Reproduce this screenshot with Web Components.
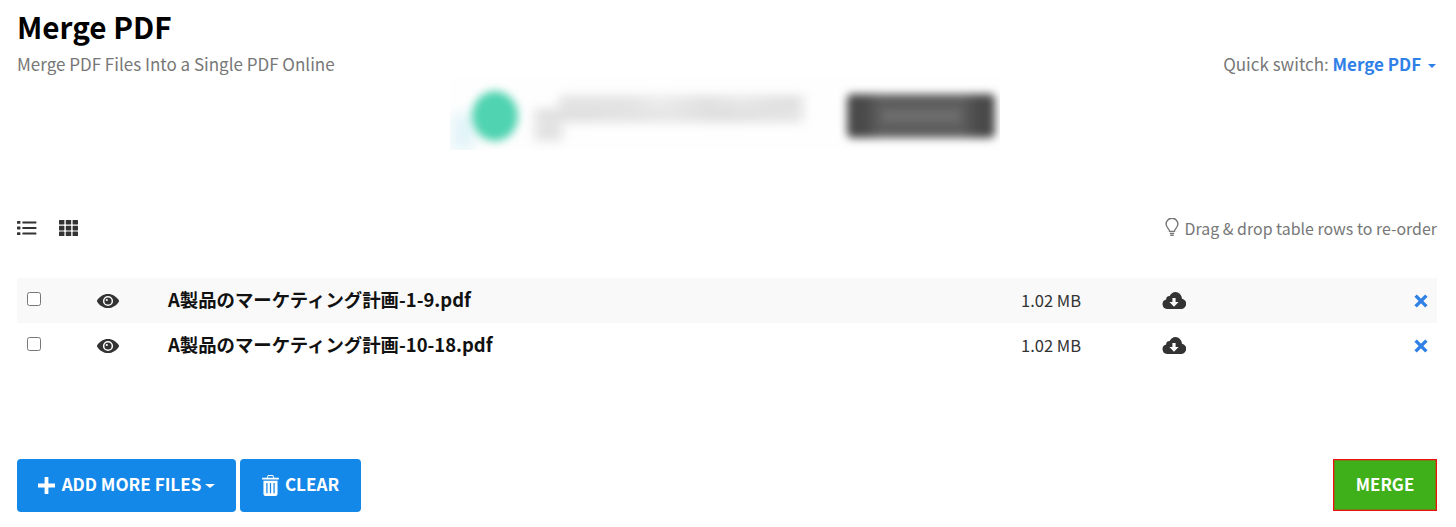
<!DOCTYPE html>
<html lang="ja">
<head>
<meta charset="utf-8">
<title>Merge PDF</title>
<style>
    html, body { margin: 0; background: #fff; }
    body {
        font-family: "Noto Sans CJK JP", "Noto Sans", sans-serif;
        color: #333;
    }
    merge-app { height: 527px; }
</style>
</head>
<body>
<merge-app>
    <page-head slot="head" heading="Merge PDF" tagline="Merge PDF Files Into a Single PDF Online"></page-head>
    <ad-banner slot="ad"></ad-banner>
    <view-bar slot="bar"></view-bar>
    <file-row slot="rows" name="A製品のマーケティング計画-1-9.pdf" size="1.02 MB" striped></file-row>
    <file-row slot="rows" name="A製品のマーケティング計画-10-18.pdf" size="1.02 MB"></file-row>
    <action-bar slot="actions"></action-bar>
</merge-app>

<script>
const ICONS = {
    list: '<svg viewBox="0 0 20 16" width="20" height="16"><g fill="currentColor"><rect x="0" y="1" width="3.4" height="2.8" rx=".6"/><rect x="0" y="6.6" width="3.4" height="2.8" rx=".6"/><rect x="0" y="12.2" width="3.4" height="2.8" rx=".6"/><rect x="5.4" y="1.4" width="14" height="2" rx=".4"/><rect x="5.4" y="7" width="14" height="2" rx=".4"/><rect x="5.4" y="12.6" width="14" height="2" rx=".4"/></g></svg>',
    grid: '<svg viewBox="0 0 19 16" width="19" height="16"><g fill="currentColor"><rect x="0" y="0" width="5.4" height="4.6" rx=".6"/><rect x="6.8" y="0" width="5.4" height="4.6" rx=".6"/><rect x="13.6" y="0" width="5.4" height="4.6" rx=".6"/><rect x="0" y="5.8" width="5.4" height="4.6" rx=".6"/><rect x="6.8" y="5.8" width="5.4" height="4.6" rx=".6"/><rect x="13.6" y="5.8" width="5.4" height="4.6" rx=".6"/><rect x="0" y="11.6" width="5.4" height="4.6" rx=".6"/><rect x="6.8" y="11.6" width="5.4" height="4.6" rx=".6"/><rect x="13.6" y="11.6" width="5.4" height="4.6" rx=".6"/></g></svg>',
    eye: '<svg viewBox="0 0 22 14" width="22" height="14"><path fill="currentColor" fill-rule="evenodd" d="M11 0C6.4 0 2.600 2.700.3 6.100a1.600 1.600 0 0 0 0 1.800C2.600 11.300 6.400 14 11 14s8.400-2.700 10.700-6.100a1.600 1.600 0 0 0 0-1.800C19.400 2.700 15.600 0 11 0zm0 1.900a5.100 5.100 0 1 1 0 10.200 5.100 5.100 0 0 1 0-10.200z"/><path fill="currentColor" fill-rule="evenodd" d="M11 3.400a3.600 3.600 0 1 1 0 7.200 3.600 3.600 0 0 1 0-7.200zM9.800 4.900a1.100 1.100 0 1 0 0 2.200 1.100 1.100 0 0 0 0-2.200z"/></svg>',
    cloud: '<svg viewBox="0 0 24 17" width="24" height="17"><path fill="currentColor" fill-rule="evenodd" d="M13.600 0c-2.700 0-5 1.700-5.900 4.100A3.600 3.600 0 0 0 4.100 7.400 4.900 4.900 0 0 0 5 17h13.800a5.200 5.200 0 0 0 1.200-10.300C19.600 3 16.900 0 13.600 0zM10.400 6h3.200v4h3l-4.600 4.800L7.400 10h3z"/></svg>',
    times: '<svg viewBox="0 0 14 14" width="14" height="14"><path fill="none" stroke="currentColor" stroke-width="3.400" d="M1.600 1.600l10.800 10.800M12.400 1.600L1.600 12.400"/></svg>',
    plus: '<svg viewBox="0 0 18 18" width="17" height="17"><path fill="currentColor" d="M7 0h4v7h7v4h-7v7H7v-7H0V7h7z"/></svg>',
    trash: '<svg viewBox="0 0 16 20" width="17" height="21"><path fill="currentColor" fill-rule="evenodd" d="M5.500 0h5l1 2.600H16v1.700H0V2.600h4.500zM6 1l-.5 1.600h5L10 1zM1.300 5.400h13.400V18a2 2 0 0 1-2 2H3.300a2 2 0 0 1-2-2zM4 7.500v9.800h1.200V7.500zm3.400 0v9.800h1.200V7.500zm3.400 0v9.800H12V7.500z"/></svg>',
    bulb: '<svg viewBox="0 0 14 20" width="14" height="20"><g fill="none" stroke="currentColor" stroke-width="1.400"><path d="M4.600 13.400c0-2.200-3.500-3.700-3.500-7.300a5.900 5.900 0 0 1 11.800 0c0 3.600-3.500 5.100-3.500 7.300z"/><path d="M4.800 15.400h4.400M5.200 17.300h3.600"/></g></svg>'
};

// shell of the page, everything is placed by its slot
class MergeApp extends HTMLElement {
    constructor() {
        super();
        this.attachShadow({mode: 'open'});
        this.shadowRoot.innerHTML = `
        <style>
            :host {
                display: flex;
                flex-direction: column;
                padding: 0 19px 0 17px;
            }
            .rows { display: block; margin-top: 38px; }
            .push { flex: 1; }
        </style>
        <slot name="head"></slot>
        <slot name="ad"></slot>
        <slot name="bar"></slot>
        <div class="rows"><slot name="rows"></slot></div>
        <div class="push"></div>
        <slot name="actions"></slot>
    `;
    }
}

class PageHead extends HTMLElement {
    constructor() {
        super();
        this.attachShadow({mode: 'open'});
        this.shadowRoot.innerHTML = `
        <style>
            :host {
                display: flex;
                justify-content: space-between;
                align-items: flex-end;
                padding-top: 9px;
            }
            h1 {
                margin: 0 0 7px;
                font-size: 29.7px;
                line-height: 36px;
                font-weight: 700;
                color: #000;
            }
            p {
                margin: 0;
                font-size: 17px;
                line-height: 24px;
                color: #777;
            }
            .switch {
                font-size: 17px;
                line-height: 24px;
                color: #777;
                padding-right: 1px;
            }
            b { color: #2f80e7; font-weight: 700; }
            .caret {
                display: inline-block;
                width: 0;
                height: 0;
                margin-left: 3px;
                vertical-align: 3px;
                border-top: 4px solid #2f80e7;
                border-left: 4px solid transparent;
                border-right: 4px solid transparent;
            }
        </style>
        <div>
            <h1></h1>
            <p></p>
        </div>
        <div class="switch">Quick switch: <b>Merge PDF</b> <span class="caret"></span></div>
    `;
    }
    connectedCallback() {
        this.shadowRoot.querySelector('h1').textContent = this.getAttribute('heading');
        this.shadowRoot.querySelector('p').textContent = this.getAttribute('tagline');
    }
}

// the blurred advert, just soft shapes
class AdBanner extends HTMLElement {
    constructor() {
        super();
        this.attachShadow({mode: 'open'});
        this.shadowRoot.innerHTML = `
        <style>
            :host {
                display: block;
                height: 72px;
                margin-top: 2px;
                overflow: hidden;
            }
            .box {
                position: relative;
                width: 550px;
                height: 72px;
                margin-left: 433px;
                box-sizing: border-box;
                padding: 0 5px 0 22px;
                display: flex;
                align-items: center;
                background: #fefefe;
                overflow: hidden;
            }
            .glow {
                position: absolute;
                left: 2px;
                top: 36px;
                width: 22px;
                height: 36px;
                background: #e0f3f7;
                filter: blur(7px);
            }
            .dot {
                width: 46px;
                height: 50px;
                border-radius: 50%;
                background: #4fd3b0;
                filter: blur(4px);
                flex: none;
                margin-top: 4px;
            }
            .copy {
                width: 268px;
                margin-left: 17px;
                margin-top: 8px;
                flex: none;
                filter: blur(6px);
            }
            .copy div { height: 10px; margin-bottom: 3px; background: #d8d8d8; }
            .copy div:nth-child(1) { margin-left: 24px; background: linear-gradient(90deg, #dadada 0 30%, #e6e6e6 40%, #d6d6d6 60%, #e0e0e0 75%, #d6d6d6 90%); }
            .copy div:nth-child(2) { height: 11px; background: linear-gradient(90deg, #d8d8d8 0 20%, #e0e0e0 50%, #d6d6d6 68%, #dedede 100%); }
            .copy div:nth-child(3) { width: 10%; height: 16px; margin-bottom: 0; background: #dedede; }
            .btn {
                width: 148px;
                height: 44px;
                margin-left: auto;
                margin-top: 4px;
                border-radius: 5px;
                background: linear-gradient(90deg, #4a4a4a 0 12%, #5e5e5e 22% 78%, #4a4a4a 88%);
                filter: blur(4px);
                flex: none;
                display: flex;
                align-items: center;
                justify-content: center;
            }
            .btn div { width: 78px; height: 10px; background: #707070; }
        </style>
        <div class="box">
            <div class="glow"></div>
            <div class="dot"></div>
            <div class="copy"><div></div><div></div><div></div></div>
            <div class="btn"><div></div></div>
        </div>
    `;
    }
}

class ViewBar extends HTMLElement {
    constructor() {
        super();
        this.attachShadow({mode: 'open'});
        this.shadowRoot.innerHTML = `
        <style>
            :host {
                display: flex;
                align-items: center;
                justify-content: space-between;
                margin-top: 66px;
                height: 24px;
                color: #333;
            }
            .views { display: flex; align-items: center; gap: 22px; }
            svg { display: block; }
            .hint {
                display: flex;
                align-items: center;
                gap: 5px;
                font-size: 15.94px;
                line-height: 24px;
                color: #777;
            }
            .hint span { padding-top: 1px; }
        </style>
        <div class="views">${ICONS.list}${ICONS.grid}</div>
        <div class="hint">${ICONS.bulb}<span>Drag &amp; drop table rows to re-order</span></div>
    `;
    }
}

class FileRow extends HTMLElement {
    constructor() {
        super();
        this.attachShadow({mode: 'open'});
        this.shadowRoot.innerHTML = `
        <style>
            :host {
                display: grid;
                grid-template-columns: 80px 71px 852px 142px 1fr 23px;
                align-items: center;
                height: 45px;
                font-size: 16.5px;
                color: #333;
            }
            :host([striped]) { background: #f9f9f9; }
            input {
                width: 14px;
                height: 14px;
                margin: 0 0 3px 10px;
                display: block;
            }
            svg { display: block; }
            .name { font-size: 18.4px; font-weight: 700; color: #111; line-height: 22px; padding-bottom: 3px; }
            .size { line-height: 22px; padding: 0 0 2px 1px; }
            .x { color: #2f80e7; }
        </style>
        <input type="checkbox">
        <div>${ICONS.eye}</div>
        <div class="name"></div>
        <div class="size"></div>
        <div>${ICONS.cloud}</div>
        <div class="x">${ICONS.times}</div>
    `;
    }
    connectedCallback() {
        this.shadowRoot.querySelector('.name').textContent = this.getAttribute('name');
        this.shadowRoot.querySelector('.size').textContent = this.getAttribute('size');
    }
}

class ActionBtn extends HTMLElement {
    constructor() {
        super();
        this.attachShadow({mode: 'open'});
        this.shadowRoot.innerHTML = `
        <style>
            :host {
                display: inline-flex;
                align-items: center;
                justify-content: center;
                gap: 5px;
                box-sizing: border-box;
                height: 53px;
                padding-bottom: 4px;
                border-radius: 4px;
                background: #1488e8;
                color: #fff;
                font-size: 17.1px;
                font-weight: 700;
            }
            :host([kind="go"]) {
                background: #3fb01a;
                border: 1px solid #f01010;
                box-shadow: inset 0 0 0 1px rgba(240, 16, 16, .3);
                border-radius: 0;
                height: 52px;
                padding-bottom: 2px;
                font-size: 16.8px;
            }
        </style>
        <slot></slot>
    `;
    }
}

class ActionBar extends HTMLElement {
    constructor() {
        super();
        this.attachShadow({mode: 'open'});
        this.shadowRoot.innerHTML = `
        <style>
            :host {
                display: flex;
                align-items: flex-start;
                justify-content: space-between;
                margin-bottom: 15px;
            }
            .left { display: flex; gap: 4px; }
            svg { display: block; margin-top: 4px; }
            action-btn.add { width: 219px; }
            action-btn.add svg { margin-right: 2px; }
            action-btn.clear { width: 121px; }
            action-btn.clear span { margin-left: 1px; }
            action-btn.merge { width: 104px; }
            .caret {
                width: 0;
                height: 0;
                margin-left: -1px;
                margin-top: 4px;
                border-top: 4px solid #fff;
                border-left: 5px solid transparent;
                border-right: 5px solid transparent;
            }
        </style>
        <div class="left">
            <action-btn class="add">${ICONS.plus}<span>ADD MORE FILES</span><i class="caret"></i></action-btn>
            <action-btn class="clear">${ICONS.trash}<span>CLEAR</span></action-btn>
        </div>
        <action-btn class="merge" kind="go">MERGE</action-btn>
    `;
    }
}

customElements.define('merge-app', MergeApp);
customElements.define('page-head', PageHead);
customElements.define('ad-banner', AdBanner);
customElements.define('view-bar', ViewBar);
customElements.define('file-row', FileRow);
customElements.define('action-btn', ActionBtn);
customElements.define('action-bar', ActionBar);
</script>
</body>
</html>
